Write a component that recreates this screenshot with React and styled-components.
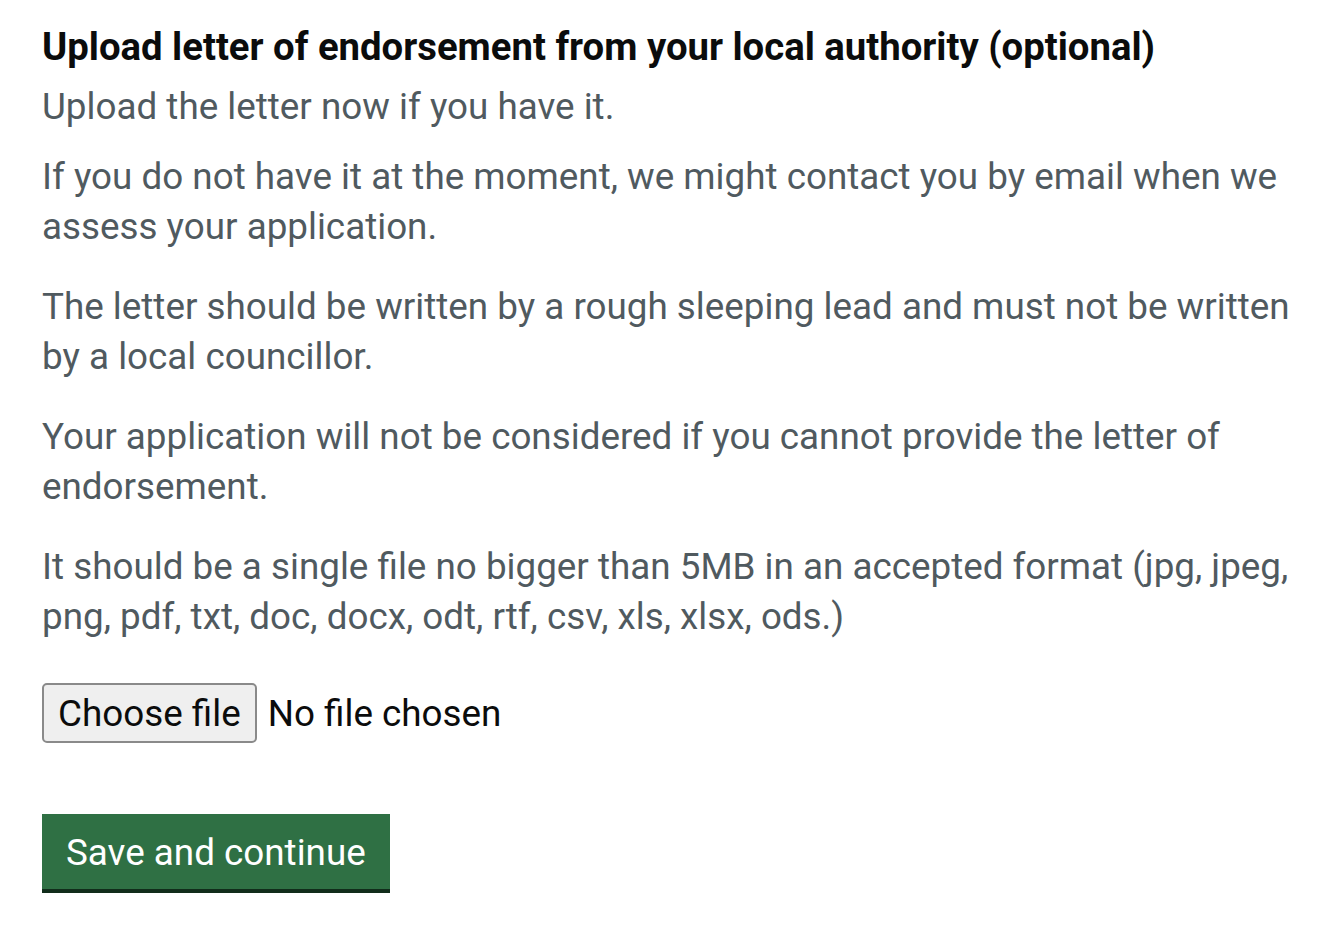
import React from "react";
import styled, { createGlobalStyle } from "styled-components";

const GlobalStyle = createGlobalStyle`
  html, body { margin: 0; padding: 0; background: #ffffff; }
  body { font-family: Roboto, "Noto Sans", Arial, sans-serif; -webkit-font-smoothing: antialiased; }
`;

const Page = styled.main`
  box-sizing: border-box;
  width: 1342px;
  padding: 22px 0 40px 42px;
`;

const FormGroup = styled.div`
  max-width: 1260px;
  display: flex;
  flex-direction: column;
  align-items: flex-start;
`;

const Label = styled.label`
  display: block;
  margin: 0 0 10px;
  font-size: 38.3px;
  font-weight: 700;
  line-height: 50px;
  color: #0b0c0c;
  white-space: nowrap;
`;

const Hint = styled.div`
  color: #505a5f;
  font-size: 36.8px;
  line-height: 50px;
`;

const HintParagraph = styled.p`
  margin: 0 0 ${p => (p.$first ? "20px" : "30px")};
`;

const FileField = styled.label`
  display: flex;
  align-items: center;
  gap: 11px;
  margin: 11px 0 0;
  font-size: 36.8px;
  color: #0b0c0c;
  cursor: pointer;
`;

const HiddenInput = styled.input`
  position: absolute;
  width: 1px;
  height: 1px;
  overflow: hidden;
  clip: rect(0 0 0 0);
  white-space: nowrap;
  border: 0;
  padding: 0;
  margin: -1px;
`;

const FileButton = styled.span`
  box-sizing: border-box;
  display: inline-flex;
  align-items: center;
  height: 60px;
  padding: 0 14px;
  background: #efefef;
  border: 2px solid #8a8a8a;
  border-radius: 5px;
  color: #0b0c0c;
`;

const FileStatus = styled.span`
  color: #0b0c0c;
`;

const Button = styled.button`
  box-sizing: border-box;
  margin: 71px 0 0;
  height: 79px;
  padding: 3px 24px 0;
  font-family: Roboto, "Noto Sans", Arial, sans-serif;
  font-size: 36.8px;
  line-height: 72px;
  color: #ffffff;
  background: #2f7044;
  border: 0;
  border-bottom: 4px solid #112d1b;
  border-radius: 0;
  cursor: pointer;
`;

const hints = [
  "Upload the letter now if you have it.",
  "If you do not have it at the moment, we might contact you by email when we assess your application.",
  "The letter should be written by a rough sleeping lead and must not be written by a local councillor.",
  "Your application will not be considered if you cannot provide the letter of endorsement.",
  "It should be a single file no bigger than 5MB in an accepted format (jpg, jpeg, png, pdf, txt, doc, docx, odt, rtf, csv, xls, xlsx, ods.)",
];

export default function App() {
  return (
    <Page>
      <GlobalStyle />
      <FormGroup>
        <Label htmlFor="letter-upload">
          Upload letter of endorsement from your local authority (optional)
        </Label>
        <Hint id="letter-upload-hint">
          {hints.map((t, i) => (
            <HintParagraph key={i} $first={i === 0}>
              {t}
            </HintParagraph>
          ))}
        </Hint>
        <FileField>
          <HiddenInput id="letter-upload" type="file" aria-describedby="letter-upload-hint" />
          <FileButton>Choose file</FileButton>
          <FileStatus>No file chosen</FileStatus>
        </FileField>
        <Button type="submit">Save and continue</Button>
      </FormGroup>
    </Page>
  );
}
